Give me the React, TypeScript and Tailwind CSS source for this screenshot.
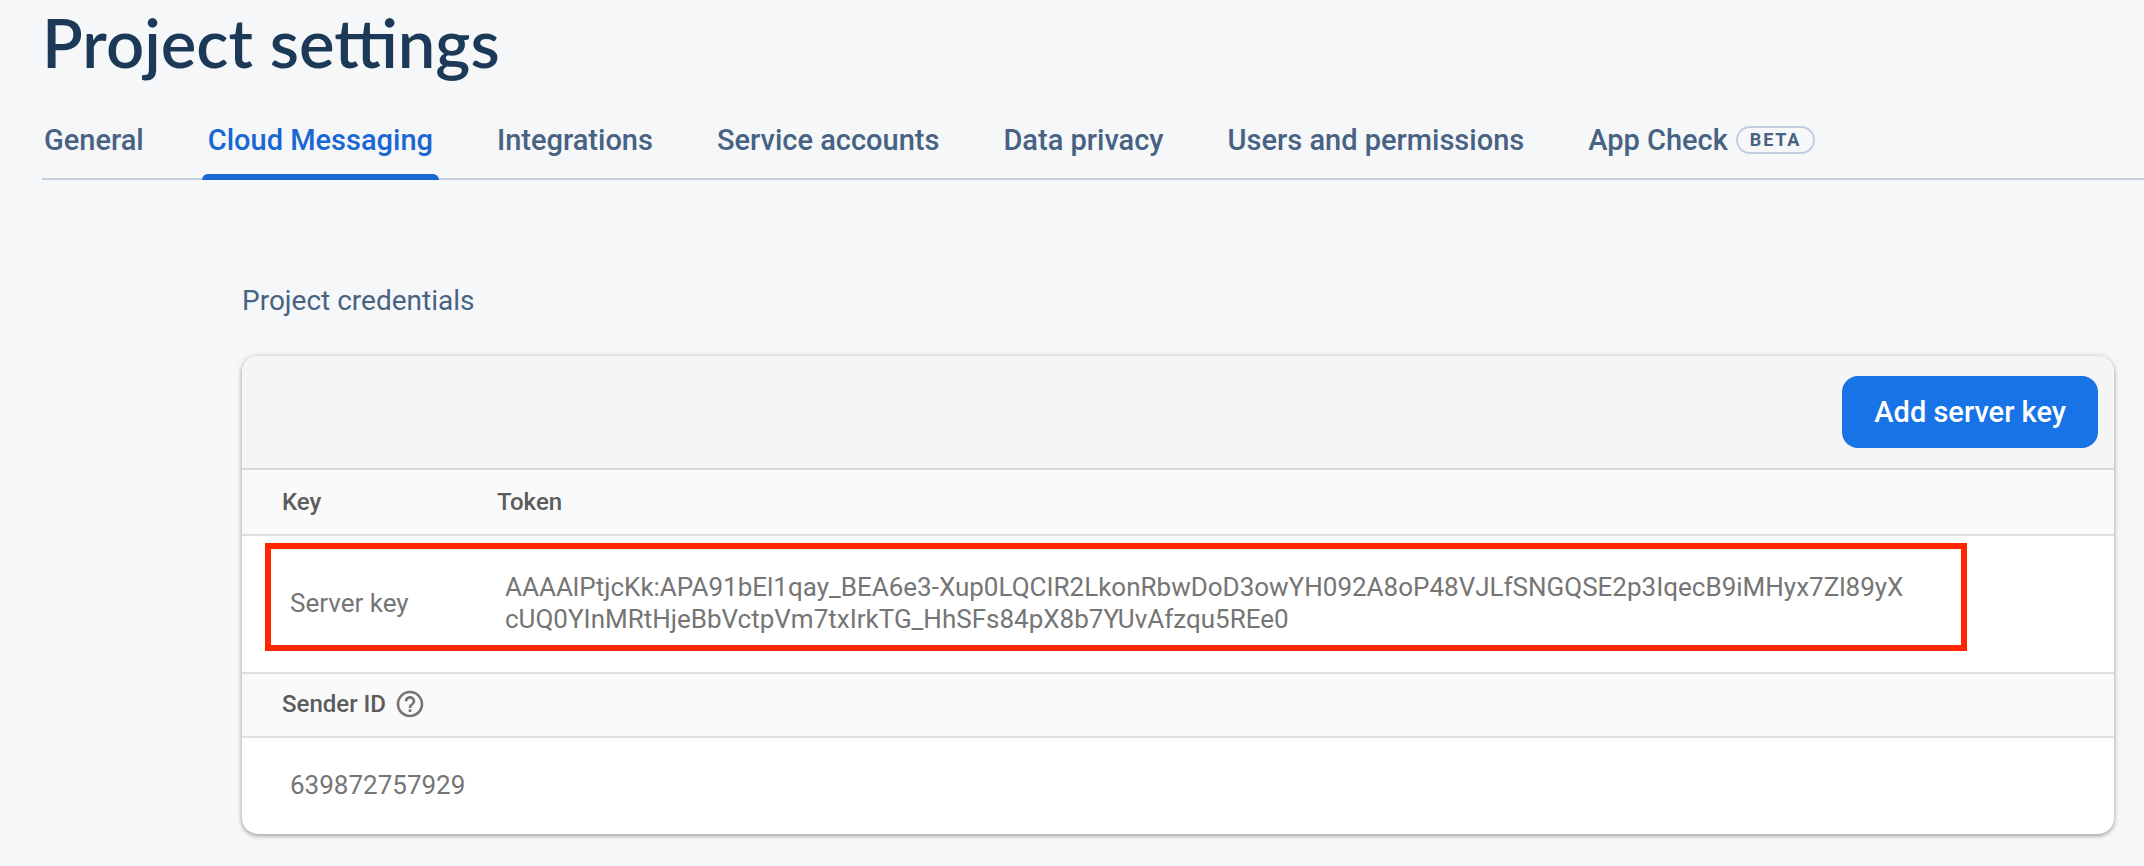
const TABS = [
  { label: "General" },
  { label: "Cloud Messaging", active: true },
  { label: "Integrations" },
  { label: "Service accounts" },
  { label: "Data privacy" },
  { label: "Users and permissions" },
  { label: "App Check", badge: "BETA" },
];

const SERVER_TOKEN =
  "AAAAlPtjcKk:APA91bEl1qay_BEA6e3-Xup0LQCIR2LkonRbwDoD3owYH092A8oP48VJLfSNGQSE2p3IqecB9iMHyx7Zl89yXcUQ0YInMRtHjeBbVctpVm7txIrkTG_HhSFs84pX8b7YUvAfzqu5REe0";

function Tabs() {
  return (
    <nav className="flex h-[74px] gap-[52px] border-b-2 border-[#c1cfde] text-[29px] leading-[36px] font-medium text-[#476282]">
      {TABS.map((tab) => (
        <a
          key={tab.label}
          href="#"
          aria-current={tab.active ? "page" : undefined}
          className={
            tab.active
              ? "relative flex h-[74px] items-start px-[6px] pt-4 whitespace-nowrap text-[#1967d2]"
              : "relative flex h-[74px] items-start px-[6px] pt-4 whitespace-nowrap first:pl-[2px]"
          }
        >
          {tab.label}
          {tab.badge && (
            <span className="mt-1 ml-2 flex h-7 items-center rounded-full border-2 border-[#c1cfde] px-3 text-[18px] leading-[24px] font-bold tracking-widest">
              {tab.badge}
            </span>
          )}
          {tab.active && (
            <span className="absolute inset-x-0 bottom-0 h-[6px] rounded-t-[6px] bg-[#1967d2]" />
          )}
        </a>
      ))}
    </nav>
  );
}

function HelpIcon() {
  return (
    <svg viewBox="0 0 24 24" className="size-8" fill="#757575" aria-hidden="true">
      <path d="M11 18h2v-2h-2v2zm1-16C6.48 2 2 6.48 2 12s4.48 10 10 10 10-4.48 10-10S17.52 2 12 2zm0 18c-4.41 0-8-3.59-8-8s3.59-8 8-8 8 3.59 8 8-3.59 8-8 8zm0-14c-2.21 0-4 1.79-4 4h2c0-1.1.9-2 2-2s2 .9 2 2c0 2-3 1.75-3 5h2c0-2.25 3-2.5 3-5 0-2.21-1.79-4-4-4z" />
    </svg>
  );
}

function CredentialsCard() {
  return (
    <div className="overflow-hidden rounded-[16px] bg-white shadow-[0_2px_4px_rgba(0,0,0,0.28),0_0_6px_rgba(0,0,0,0.14)]">
      <div className="flex h-[114px] items-center justify-end border-b-2 border-[#d6d6d6] bg-[#f5f5f5] px-4">
        <button
          type="button"
          className="h-[72px] rounded-[16px] bg-[#1873e7] px-8 text-[29px] leading-[36px] font-medium text-white"
        >
          Add server key
        </button>
      </div>
      <table className="w-full table-fixed border-separate border-spacing-0 text-left text-[26px] leading-[32px] text-[#757575]">
        <colgroup>
          <col className="w-[255px]" />
          <col />
        </colgroup>
        <thead>
          <tr className="bg-[#fafafa] text-[24px] text-[#5c5c5c]">
            <th scope="col" className="h-[66px] border-b-2 border-[#e0e0e0] pl-10 font-medium">
              Key
            </th>
            <th scope="col" className="h-[66px] border-b-2 border-[#e0e0e0] font-medium">
              Token
            </th>
          </tr>
        </thead>
        <tbody>
          <tr className="relative">
            <td className="h-[138px] border-b-2 border-[#e0e0e0] pb-[2px] pl-12">
              Server key
              <span className="pointer-events-none absolute top-[7px] right-[147px] left-[23px] h-[108px] border-[6px] border-[#ff2600]" />
            </td>
            <td className="h-[138px] border-b-2 border-[#e0e0e0] pr-[202px] pb-[2px] pl-2 break-all">
              {SERVER_TOKEN}
            </td>
          </tr>
          <tr className="bg-[#fafafa] text-[24px] text-[#5c5c5c]">
            <th
              scope="col"
              colSpan={2}
              className="h-[64px] border-b-2 border-[#e0e0e0] pb-[2px] pl-10 font-medium"
            >
              <span className="flex items-center gap-2">
                Sender ID
                <HelpIcon />
              </span>
            </th>
          </tr>
          <tr>
            <td colSpan={2} className="h-[96px] pb-[2px] pl-12">
              639872757929
            </td>
          </tr>
        </tbody>
      </table>
    </div>
  );
}

export default function App() {
  return (
    <div className="min-h-screen bg-[#f6f7f9] pb-8 font-[Roboto,sans-serif]">
      <header className="pl-[42px]">
        <h1 className="pt-[2px] pb-6 font-[Lato,sans-serif] text-[67px] leading-[80px] font-semibold text-[#1c3a57]">
          Project settings
        </h1>
        <Tabs />
      </header>
      <main className="pt-[103px] pr-[30px] pl-[242px]">
        <h2 className="pb-[37px] text-[28px] leading-[36px] text-[#476282]">
          Project credentials
        </h2>
        <CredentialsCard />
      </main>
    </div>
  );
}
